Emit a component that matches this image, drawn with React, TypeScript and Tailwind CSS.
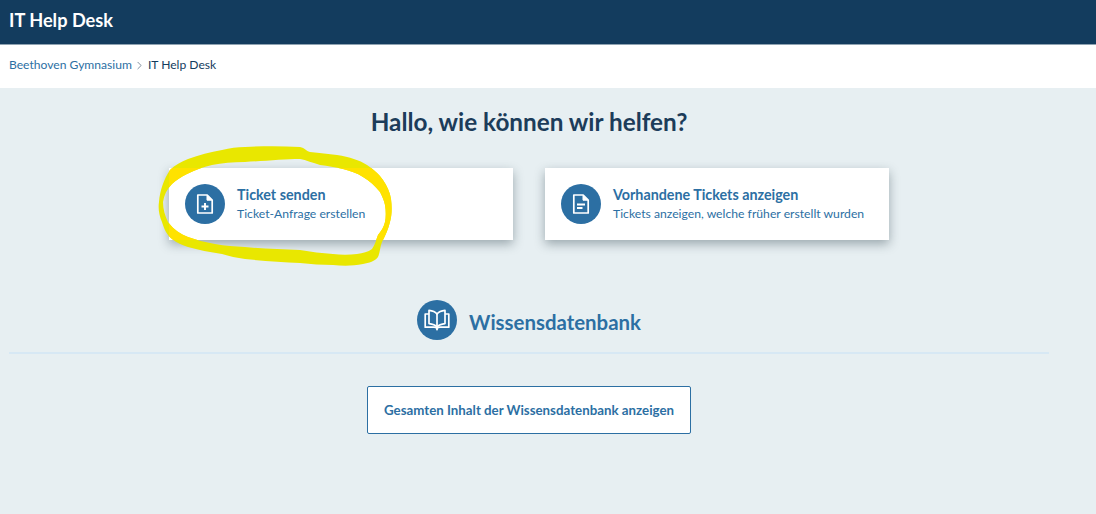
import { ChevronRight } from 'lucide-react';
import type { ReactNode } from 'react';

// outer and inner edge of the marker stroke, filled with evenodd
const SCRIBBLE =
  'M300 147C305 148 306 151 310 152C320 153 328 154 337 155C350 157 359 160 367 165C374 170 379 174 383 180C387 186 390 192 391 199C392 207 392 215 390 222C388 230 385 236 382 242C380 247 380 253 378 257C375 261 369 263 363 264C353 266 343 266 333 265C322 265 311 264 300 263C282 262 263 261 245 259C237 258 229 256 222 254C210 252 198 250 188 247C182 245 177 243 172 239C167 235 164 229 162 222C159 215 158 208 159 202C160 190 164 179 170 170C175 165 181 162 188 159C199 155 210 152 222 150C230 148 237 147 245 147C263 146 282 146 300 147Z' +
  'M300 159C285 159 265 161 245 162C233 162 222 163 212 165C203 167 195 170 187 174C181 177 176 180 172 184C167 189 164 195 163 202C163 209 165 216 168 222C173 229 180 234 188 237C196 240 205 242 215 244C225 246 235 246 245 247C263 249 282 249 300 250C311 252 322 253 333 254C341 255 349 255 357 254C363 253 368 252 372 249C375 245 376 240 378 235C381 231 384 227 385 222C386 217 386 211 385 205C384 200 382 196 380 192C375 186 370 181 363 177C357 173 350 171 343 169C335 167 328 166 320 165C313 163 306 160 300 159Z';

function IconCircle({ children }: { children: ReactNode }) {
  return (
    <div className="flex h-10 w-10 shrink-0 items-center justify-center rounded-full bg-[#2c6fa3] text-white">
      {children}
    </div>
  );
}

function DocIcon({ kind }: { kind: 'plus' | 'lines' }) {
  return (
    <svg width="18" height="20" viewBox="0 0 18 20" fill="none" stroke="currentColor" strokeWidth="1.7">
      <path d="M1.8 1h9.4l5 5v13H1.8z" strokeLinejoin="round" />
      <path d="M11 1.2v5h5" fill="currentColor" strokeWidth="1" />
      {kind === 'plus' ? (
        <path d="M9 9v7M5.5 12.5h7" strokeWidth="1.9" />
      ) : (
        <path d="M5 10.5h8M5 14h5.5" strokeWidth="1.9" />
      )}
    </svg>
  );
}

function BookIcon() {
  return (
    <svg width="26" height="22" viewBox="0 0 26 22" fill="none" stroke="currentColor" strokeWidth="1.7" strokeLinejoin="round">
      <path d="M13 5C11.4 3 8.6 1.8 5 1.4v13.2c3.6.4 6.4 1.6 8 3.4 1.6-1.8 4.4-3 8-3.4V1.4C17.4 1.8 14.6 3 13 5z" />
      <path d="M13 5v13" />
      <path d="M5 5H1.2v13.2H10c1 0 2.2.4 3 1.2.8-.8 2-1.2 3-1.2h8.8V5H21" />
      <circle cx="13" cy="20.4" r="1" fill="currentColor" stroke="none" />
    </svg>
  );
}

function ActionCard({ icon, title, text }: { icon: ReactNode; title: string; text: string }) {
  return (
    <a className="flex h-[72px] w-[344px] items-center gap-3 bg-white pl-4 shadow-[0_4px_10px_rgba(40,60,70,0.4)]">
      <IconCircle>{icon}</IconCircle>
      <div className="pb-[2px] text-[#2c6fa3]">
        <div className="text-[14.3px] leading-[20px] font-bold">{title}</div>
        <div className="text-[12.2px] leading-[17px]">{text}</div>
      </div>
    </a>
  );
}

export default function App() {
  return (
    <div className="relative flex h-[514px] w-[1096px] flex-col overflow-hidden bg-[#e7eff2] font-['Lato','Open_Sans',sans-serif]">
      <header className="flex h-[45px] shrink-0 items-center border-b border-[#8fa3b2] bg-[#133c5e] px-[9px] pb-[3px] text-[18.2px] font-bold text-white">
        IT Help Desk
      </header>

      <nav className="flex h-[43px] shrink-0 items-center bg-white px-[9px] pb-[2px] text-[12.1px]">
        <span className="text-[#2c6fa3]">Beethoven Gymnasium</span>
        <ChevronRight className="mx-[1.5px] h-[13px] w-[13px] text-[#66788a]" strokeWidth={1.5} />
        <span className="text-[#133c5e]">IT Help Desk</span>
      </nav>

      <main className="flex flex-col">
        <h1 className="mt-[19px] pr-[38px] text-center text-[24.3px] leading-[30px] font-bold text-[#1c3c5a]">
          Hallo, wie können wir helfen?
        </h1>

        <div className="mt-[31px] flex justify-center gap-[32px] pr-[38px]">
          <ActionCard icon={<DocIcon kind="plus" />} title="Ticket senden" text="Ticket-Anfrage erstellen" />
          <ActionCard
            icon={<DocIcon kind="lines" />}
            title="Vorhandene Tickets anzeigen"
            text="Tickets anzeigen, welche früher erstellt wurden"
          />
        </div>

        <div className="mx-[9px] mt-[60px] flex h-[54px] w-[1040px] items-start justify-center gap-3 border-b-2 border-[#d7e8f4]">
          <IconCircle>
            <BookIcon />
          </IconCircle>
          <h2 className="mt-[6px] text-[20.4px] leading-[32px] font-bold text-[#2c6fa3]">Wissensdatenbank</h2>
        </div>

        <div className="mt-[32px] flex justify-center pr-[38px]">
          <a className="flex h-[48px] w-[324px] items-center justify-center rounded-[2px] border border-[#2c6fa3] bg-white pt-[2px] text-[13.3px] font-bold text-[#2c6fa3]">
            Gesamten Inhalt der Wissensdatenbank anzeigen
          </a>
        </div>
      </main>

      {/* yellow marker on top of the page, warmer where it crosses the white card */}
      <svg className="pointer-events-none absolute top-0 left-0" width="1096" height="514">
        <defs>
          <clipPath id="card-area">
            <rect x="169" y="168" width="344" height="72" />
          </clipPath>
        </defs>
        <path d={SCRIBBLE} fill="#e9e700" fillRule="evenodd" />
        <path d={SCRIBBLE} fill="#ffe200" fillRule="evenodd" clipPath="url(#card-area)" />
      </svg>
    </div>
  );
}
